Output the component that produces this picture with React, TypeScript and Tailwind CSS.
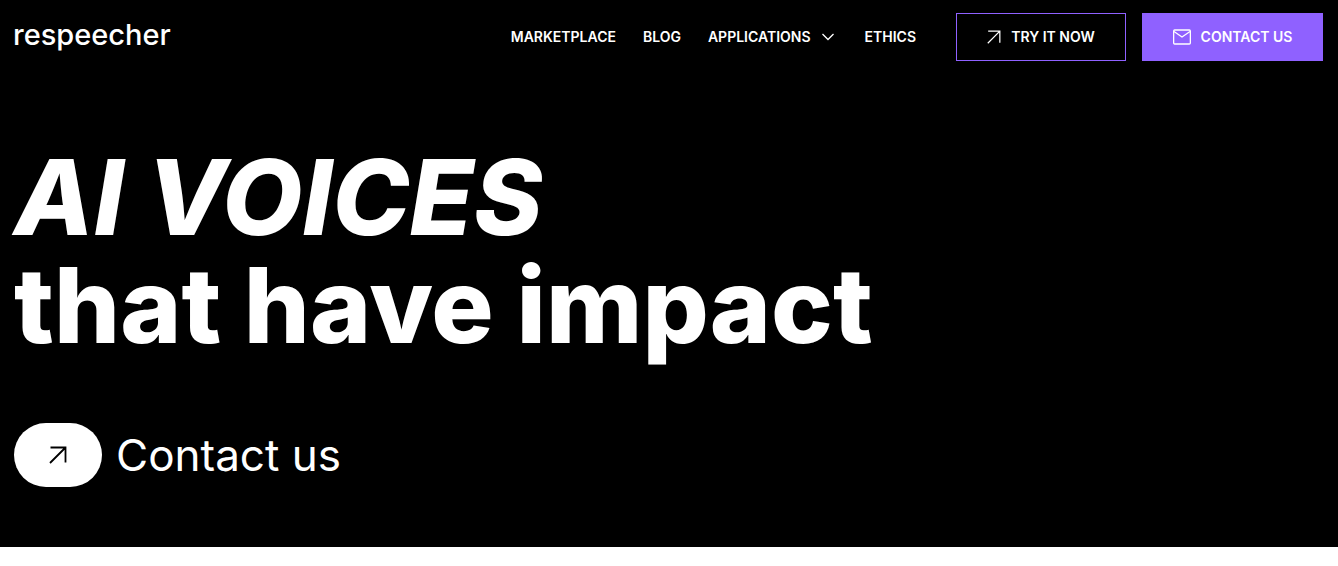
function ArrowIcon({ className }: { className: string }) {
  return (
    <svg viewBox="0 0 18 18" fill="none" stroke="currentColor" className={className} aria-hidden="true">
      <path d="M1.5 1.5H16.5V16.5M16.5 1.5L1 17" />
    </svg>
  );
}

function ChevronIcon() {
  return (
    <svg viewBox="0 0 12 8" fill="none" stroke="currentColor" strokeWidth="1.3" className="h-2 w-3" aria-hidden="true">
      <path d="M.5 1L6 6.5L11.5 1" />
    </svg>
  );
}

function MailIcon() {
  return (
    <svg viewBox="0 0 18 16" fill="none" stroke="currentColor" strokeWidth="1.3" className="h-4 w-[18px]" aria-hidden="true">
      <rect x=".65" y="1" width="16.7" height="14" rx="1" />
      <path d="M1 2.5L9 8L17 2.5" />
    </svg>
  );
}

export default function App() {
  return (
    <div className="min-h-screen bg-white font-['Inter',sans-serif] text-white">
      <div className="bg-black pb-[60px]">
        <header className="flex h-[74px] items-center justify-between pr-[15px] pl-[13px]">
          <a href="#home" className="pb-1 text-[29px] leading-10 font-medium">
            respeecher
          </a>
          <div className="flex items-center gap-10">
            <nav className="flex items-center gap-[27px] text-sm font-semibold" aria-label="Main">
              <a href="#marketplace">MARKETPLACE</a>
              <a href="#blog">BLOG</a>
              <button type="button" className="mr-1 flex items-center gap-[11px]">
                APPLICATIONS
                <ChevronIcon />
              </button>
              <a href="#ethics">ETHICS</a>
            </nav>
            <div className="flex gap-4 text-sm font-semibold">
              <a
                href="#try"
                className="flex h-12 w-[170px] items-center justify-center gap-[10px] border border-[#8f61ff]"
              >
                <ArrowIcon className="size-[14px] stroke-[1.6]" />
                TRY IT NOW
              </a>
              <a href="#contact" className="flex h-12 w-[181px] items-center justify-center gap-[10px] bg-[#8f61ff]">
                <MailIcon />
                CONTACT US
              </a>
            </div>
          </div>
        </header>
        <main className="px-[14px] pt-[69px]">
          <h1 className="text-[104px] leading-[108px] font-extrabold">
            <em className="block">AI VOICES</em>
            <span className="block">that have impact</span>
          </h1>
          <a href="#contact" className="mt-16 flex items-center gap-[14px] text-[44px] leading-[64px]">
            <span className="flex h-16 w-[88px] items-center justify-center rounded-[32px] bg-white text-black">
              <ArrowIcon className="size-[18px] stroke-[1.8]" />
            </span>
            Contact us
          </a>
        </main>
      </div>
    </div>
  );
}
